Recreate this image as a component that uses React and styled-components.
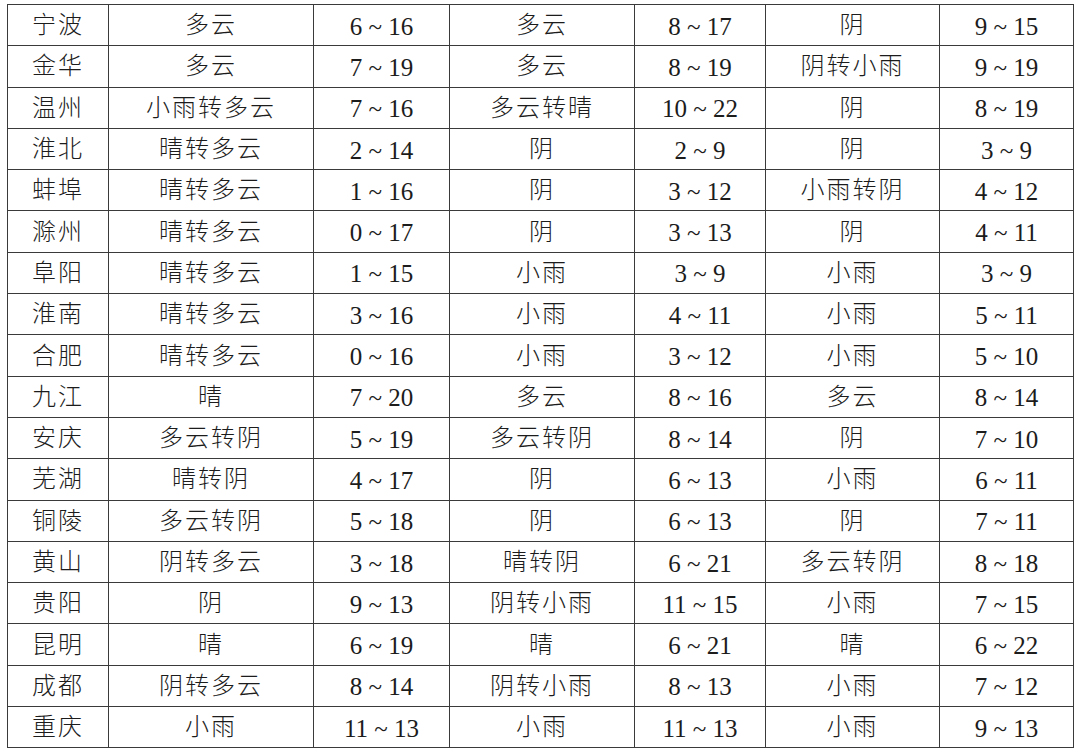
import React from "react";
import styled, { createGlobalStyle } from "styled-components";

const GlobalStyle = createGlobalStyle`
  html, body {
    margin: 0;
    padding: 0;
    background: #ffffff;
  }
`;

const S = {
  Page: styled.div`
    width: 1080px;
    height: 750px;
    padding: 4px 0 0 7px;
    box-sizing: border-box;
    background: #fff;
  `,
  Table: styled.table`
    border-collapse: collapse;
    table-layout: fixed;
    width: 1066px;
    font-family: "Liberation Serif", "Noto Sans CJK SC", serif;
    font-weight: 300;
    color: #1c1c1c;
  `,
  Row: styled.tr`
    height: 41.3px;
  `,
  Cell: styled.td`
    border: 1.5px solid #3a3a3a;
    padding: 0;
    text-align: center;
    vertical-align: middle;
    line-height: 1;
    white-space: nowrap;
    font-size: ${({ $num }) => ($num ? "25px" : "24px")};
    letter-spacing: ${({ $num }) => ($num ? "0" : "2px")};
    padding-top: ${({ $num }) => ($num ? "2px" : "0")};
  `,
};

const widths = [101, 205, 136, 185, 131, 174, 134];

const rows = [
  ["宁波", "多云", "6 ~ 16", "多云", "8 ~ 17", "阴", "9 ~ 15"],
  ["金华", "多云", "7 ~ 19", "多云", "8 ~ 19", "阴转小雨", "9 ~ 19"],
  ["温州", "小雨转多云", "7 ~ 16", "多云转晴", "10 ~ 22", "阴", "8 ~ 19"],
  ["淮北", "晴转多云", "2 ~ 14", "阴", "2 ~ 9", "阴", "3 ~ 9"],
  ["蚌埠", "晴转多云", "1 ~ 16", "阴", "3 ~ 12", "小雨转阴", "4 ~ 12"],
  ["滁州", "晴转多云", "0 ~ 17", "阴", "3 ~ 13", "阴", "4 ~ 11"],
  ["阜阳", "晴转多云", "1 ~ 15", "小雨", "3 ~ 9", "小雨", "3 ~ 9"],
  ["淮南", "晴转多云", "3 ~ 16", "小雨", "4 ~ 11", "小雨", "5 ~ 11"],
  ["合肥", "晴转多云", "0 ~ 16", "小雨", "3 ~ 12", "小雨", "5 ~ 10"],
  ["九江", "晴", "7 ~ 20", "多云", "8 ~ 16", "多云", "8 ~ 14"],
  ["安庆", "多云转阴", "5 ~ 19", "多云转阴", "8 ~ 14", "阴", "7 ~ 10"],
  ["芜湖", "晴转阴", "4 ~ 17", "阴", "6 ~ 13", "小雨", "6 ~ 11"],
  ["铜陵", "多云转阴", "5 ~ 18", "阴", "6 ~ 13", "阴", "7 ~ 11"],
  ["黄山", "阴转多云", "3 ~ 18", "晴转阴", "6 ~ 21", "多云转阴", "8 ~ 18"],
  ["贵阳", "阴", "9 ~ 13", "阴转小雨", "11 ~ 15", "小雨", "7 ~ 15"],
  ["昆明", "晴", "6 ~ 19", "晴", "6 ~ 21", "晴", "6 ~ 22"],
  ["成都", "阴转多云", "8 ~ 14", "阴转小雨", "8 ~ 13", "小雨", "7 ~ 12"],
  ["重庆", "小雨", "11 ~ 13", "小雨", "11 ~ 13", "小雨", "9 ~ 13"],
];

function App() {
  return (
    <S.Page>
      <GlobalStyle />
      <S.Table>
        <colgroup>
          {widths.map((w, i) => (
            <col key={`col${i}`} style={{ width: w }} />
          ))}
        </colgroup>
        <tbody>
          {rows.map((row, index) => (
            <S.Row key={`row${index}`}>
              {row.map((text, j) => (
                <S.Cell key={`cell${index}-${j}`} $num={/\d/.test(text)}>
                  {text}
                </S.Cell>
              ))}
            </S.Row>
          ))}
        </tbody>
      </S.Table>
    </S.Page>
  );
}

export default App;
